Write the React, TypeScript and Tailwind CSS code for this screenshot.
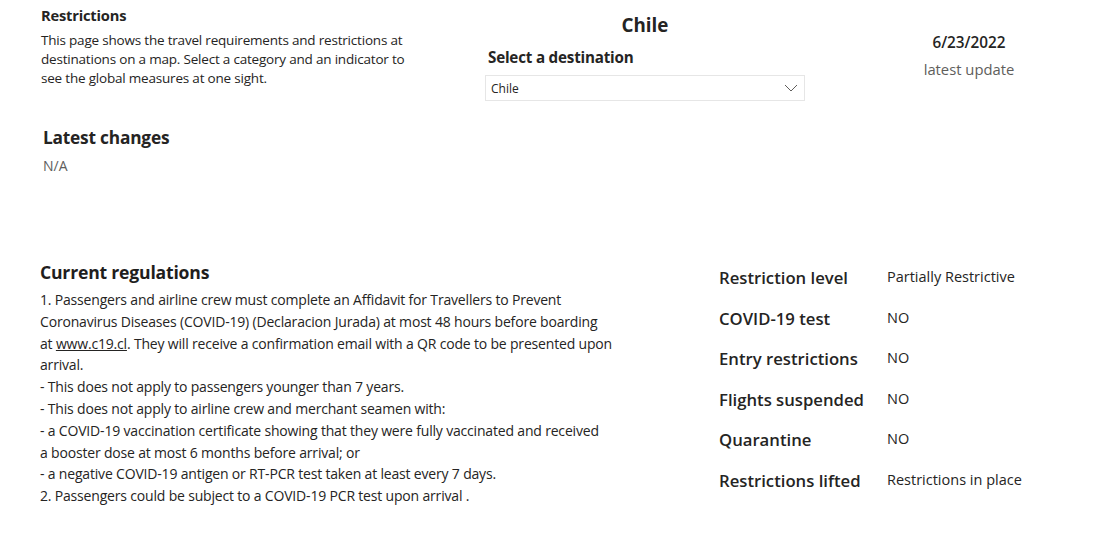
import React from "react";

const font = { fontFamily: '"Open Sans", "Noto Sans", sans-serif' };

function Row({ label, value }: { label: string; value: string }) {
  return (
    <div className="flex items-start h-[40.6px]">
      <div className="w-[168px] text-[16.7px] font-semibold text-[#252423] leading-[22px]">{label}</div>
      <div className="text-[14.5px] text-[#252423] leading-[20px]">{value}</div>
    </div>
  );
}

export default function App() {
  return (
    <div className="w-[1097px] h-[534px] bg-white overflow-hidden text-[#252423] font-['Open_Sans',sans-serif]" style={font}>
      <div className="flex h-[124px]">
        <div className="pl-[41px] pt-[5px] w-[485px]">
          <div className="text-[14.7px] font-bold leading-[20px] tracking-[-0.2px]">Restrictions</div>
          <div className="mt-[6px] text-[13.5px] leading-[19px] text-[#252423] tracking-[-0.2px]">
            <div>This page shows the travel requirements and restrictions at</div>
            <div>destinations on a map. Select a category and an indicator to</div>
            <div>see the global measures at one sight.</div>
          </div>
        </div>
        <div className="w-[320px] pt-[12px]">
          <div className="text-center text-[18.8px] font-bold leading-[26px]">Chile</div>
          <div className="ml-[3px] mt-[9px] text-[15.2px] font-bold leading-[20px] tracking-[-0.2px]">Select a destination</div>
          <div className="mt-[8px] h-[26px] border border-[#e6e6e6] flex items-center justify-between px-[5px]">
            <span className="text-[12px] text-[#252423] mt-[1px]">Chile</span>
            <svg width="14" height="8" viewBox="0 0 14 8" className="mr-[1px]">
              <path d="M1 1l6 6 6-6" fill="none" stroke="#605e5c" strokeWidth="1" />
            </svg>
          </div>
        </div>
        <div className="flex-1 flex flex-col items-center pt-[31px] pl-[36px]">
          <div className="text-[15.3px] font-semibold leading-[22px] text-[#252423]">6/23/2022</div>
          <div className="mt-[6px] text-[14.8px] leading-[20px] text-[#605e5c]">latest update</div>
        </div>
      </div>

      <div className="pl-[43px] h-[137px]">
        <div className="mt-[1px] text-[17.3px] font-bold leading-[26px] tracking-[-0.2px]">Latest changes</div>
        <div className="mt-[5px] text-[14px] leading-[20px] text-[#605e5c]">N/A</div>
      </div>

      <div className="flex">
        <div className="pl-[40px] w-[719px]">
          <div className="-mt-[2px] text-[17.6px] font-bold leading-[24px] tracking-[-0.2px] text-[#1f1e1d]">Current regulations</div>
          <div className="mt-[5px] text-[14px] leading-[21.8px] text-[#252423] tracking-[-0.18px] whitespace-nowrap">
            <div>1. Passengers and airline crew must complete an Affidavit for Travellers to Prevent</div>
            <div>Coronavirus Diseases (COVID-19) (Declaracion Jurada) at most 48 hours before boarding</div>
            <div>
              at <span className="underline">www.c19.cl</span>. They will receive a confirmation email with a QR code to be presented upon
            </div>
            <div>arrival.</div>
            <div>- This does not apply to passengers younger than 7 years.</div>
            <div>- This does not apply to airline crew and merchant seamen with:</div>
            <div>- a COVID-19 vaccination certificate showing that they were fully vaccinated and received</div>
            <div>a booster dose at most 6 months before arrival; or</div>
            <div>- a negative COVID-19 antigen or RT-PCR test taken at least every 7 days.</div>
            <div>2. Passengers could be subject to a COVID-19 PCR test upon arrival .</div>
          </div>
        </div>
        <div className="pt-[5px]">
          <Row label="Restriction level" value="Partially Restrictive" />
          <Row label="COVID-19 test" value="NO" />
          <Row label="Entry restrictions" value="NO" />
          <Row label="Flights suspended" value="NO" />
          <Row label="Quarantine" value="NO" />
          <Row label="Restrictions lifted" value="Restrictions in place" />
        </div>
      </div>
    </div>
  );
}
